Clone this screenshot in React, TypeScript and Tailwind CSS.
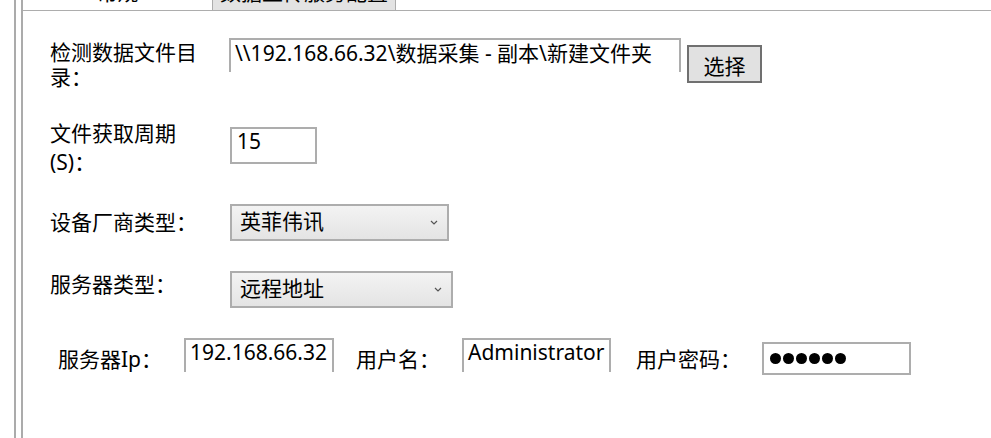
import React from "react";

const FONT = "font-['Noto_Sans','Noto_Sans_CJK_SC',sans-serif]";

function Chevron() {
  return (
    <svg width="8" height="5" viewBox="0 0 8 5" className="block">
      <path d="M1 1 L4 4 L7 1" fill="none" stroke="#555" strokeWidth="1.2" />
    </svg>
  );
}

function Select({ value, width }: { value: string; width: string }) {
  return (
    <div
      className={`${width} h-[37px] border-2 border-[#adadad] bg-gradient-to-b from-[#f3f3f3] to-[#e4e4e4] flex items-start justify-between pl-[8px] pr-[9px]`}
    >
      <span className="leading-[31px]">{value}</span>
      <span className="pt-[14px]">
        <Chevron />
      </span>
    </div>
  );
}

export default function App() {
  return (
    <div
      className={`${FONT} w-[991px] h-[438px] bg-white overflow-hidden flex text-[21px] text-black`}
    >
      <div className="w-[14px] shrink-0" />
      <div className="w-[2px] shrink-0 bg-[#ababab]" />
      <div className="w-[5px] shrink-0" />
      <div className="w-[2px] shrink-0 bg-[#ababab]" />
      <div className="flex-1 flex flex-col">
        {/* tab strip */}
        <div className="h-[10px] flex overflow-hidden">
          <div className="w-[189px] h-[10px] flex justify-center overflow-hidden">
            <span className="leading-[21px] -mt-[18px]">常规</span>
          </div>
          <div className="w-[184px] h-[10px] bg-[#e3e3e3] border-l border-r border-[#adadad] flex justify-center overflow-hidden">
            <span className="leading-[21px] -mt-[18px]">数据上传服务配置</span>
          </div>
        </div>
        <div className="h-px bg-[#adadad]" />

        <div className="flex-1 flex flex-col pl-[27px]">
          {/* row 1 */}
          <div className="mt-[27px] flex items-start">
            <div className="w-[150px] leading-[25px] pt-[2px]">检测数据文件目录：</div>
            <div className="ml-[29px] w-[452px] h-[34px] border-2 border-b-0 border-[#adadad] pl-[4px] pt-[2px] leading-[22px] whitespace-nowrap overflow-hidden">
              \\192.168.66.32\数据采集 - 副本\新建文件夹
            </div>
            <div className="ml-[6px] mt-[7px] w-[75px] h-[38px] border-2 border-[#707070] bg-[#e1e1e1] flex justify-center pt-[5px] leading-[29px]">
              选择
            </div>
          </div>

          {/* row 2 */}
          <div className="mt-[29px] flex items-start">
            <div className="w-[150px] leading-[29px]">文件获取周期(S)：</div>
            <div className="ml-[30px] mt-[8px] w-[87px] h-[37px] border-2 border-[#adadad] pl-[5px] pt-[1px] leading-[22px]">
              15
            </div>
          </div>

          {/* row 3 */}
          <div className="mt-[27px] flex items-start">
            <div className="w-[150px] leading-[25px] pt-[6px]">设备厂商类型：</div>
            <div className="ml-[30px]">
              <Select value="英菲伟讯" width="w-[219px]" />
            </div>
          </div>

          {/* row 4 */}
          <div className="mt-[30px] flex items-start">
            <div className="w-[150px] leading-[25px] pt-[1px]">服务器类型：</div>
            <div className="ml-[30px]">
              <Select value="远程地址" width="w-[223px]" />
            </div>
          </div>

          {/* row 5 */}
          <div className="mt-[30px] flex items-start">
            <div className="ml-[8px] w-[126px] leading-[25px] pt-[9px] whitespace-nowrap">服务器Ip：</div>
            <div className="w-[150px] h-[34px] border-2 border-b-0 border-[#adadad] pl-[4px] pt-[1px] leading-[22px] whitespace-nowrap overflow-hidden">
              192.168.66.32
            </div>
            <div className="ml-[22px] w-[106px] leading-[25px] pt-[9px] whitespace-nowrap">用户名：</div>
            <div className="w-[149px] h-[34px] border-2 border-b-0 border-[#adadad] pl-[4px] pt-[1px] leading-[22px] whitespace-nowrap overflow-hidden">
              Administrator
            </div>
            <div className="ml-[25px] w-[126px] leading-[25px] pt-[9px] whitespace-nowrap">用户密码：</div>
            <div className="mt-[4px] w-[149px] h-[33px] border-2 border-[#adadad] pl-[6px] flex items-center gap-[2px]">
              {[0, 1, 2, 3, 4, 5].map((i) => (
                <span key={i} className="w-[11px] h-[11px] rounded-full bg-black" />
              ))}
            </div>
          </div>
        </div>
      </div>
    </div>
  );
}
